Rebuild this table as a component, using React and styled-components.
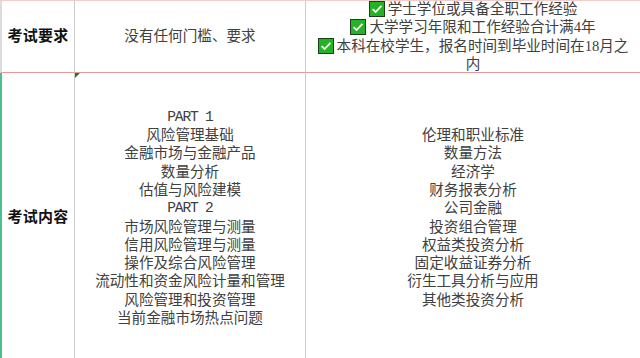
import styled, { createGlobalStyle } from "styled-components";

const GlobalStyle = createGlobalStyle`
  html, body {
    margin: 0;
    padding: 0;
    background: #fff;
    overflow: hidden;
  }
  body {
    font-family: "Liberation Serif", "Noto Sans CJK SC", serif;
  }
`;

const part1 = ["风险管理基础", "金融市场与金融产品", "数量分析", "估值与风险建模"];
const part2 = [
  "市场风险管理与测量",
  "信用风险管理与测量",
  "操作及综合风险管理",
  "流动性和资金风险计量和管理",
  "风险管理和投资管理",
  "当前金融市场热点问题",
];
const cfaTopics = [
  "伦理和职业标准",
  "数量方法",
  "经济学",
  "财务报表分析",
  "公司金融",
  "投资组合管理",
  "权益类投资分析",
  "固定收益证券分析",
  "衍生工具分析与应用",
  "其他类投资分析",
];
const requirements = [
  "学士学位或具备全职工作经验",
  "大学学习年限和工作经验合计满4年",
  "本科在校学生，报名时间到毕业时间在18月之内",
];

const CheckIcon = () => (
  <CheckSvg viewBox="0 0 16 16" width="16" height="16">
    <rect x="0.5" y="0.5" width="15" height="15" fill="#22b422" stroke="#1d3d1d" />
    <path d="M3.6 8.2 L6.6 11 L12.4 4.8" fill="none" stroke="#fff" strokeWidth="1.8" />
  </CheckSvg>
);

const App = () => {
  return (
    <>
      <GlobalStyle />
      <Sheet>
        <Label $edge="#dcdcdc" $h={72}>考试要求</Label>
        <Cell $h={72}>没有任何门槛、要求</Cell>
        <ReqCell $last $h={72}>
          {requirements.map((r) => (
            <ReqLine key={r}>
              <CheckIcon />
              {r}
            </ReqLine>
          ))}
        </ReqCell>

        <Label $edge="#4cc08f" $h={290}>考试内容</Label>
        <Cell $h={290} $marker>
          <PartLine>PART 1</PartLine>
          {part1.map((t) => (
            <Line key={t}>{t}</Line>
          ))}
          <PartLine>PART 2</PartLine>
          {part2.map((t) => (
            <Line key={t}>{t}</Line>
          ))}
        </Cell>
        <Cell $h={290} $last>
          {cfaTopics.map((t) => (
            <Line key={t}>{t}</Line>
          ))}
        </Cell>
      </Sheet>
    </>
  );
};

export default App;

// Styled Components
const Sheet = styled.div`
  display: grid;
  grid-template-columns: 75px 231px 1fr;
  width: 640px;
  border-top: 1px solid #f4cccc;
`;

const Cell = styled.div`
  position: relative;
  box-sizing: border-box;
  height: ${({ $h }) => $h}px;
  display: flex;
  flex-direction: column;
  align-items: center;
  justify-content: center;
  text-align: center;
  color: #404040;
  font-size: 14.6px;
  line-height: 18.3px;
  border-right: ${({ $last }) => ($last ? "none" : "1px solid #cbcbcb")};
  border-bottom: 1px solid #e89a9a;

  &::before {
    content: "";
    display: ${({ $marker }) => ($marker ? "block" : "none")};
    position: absolute;
    top: 0;
    left: 0;
    width: 0;
    height: 0;
    border-top: 5px solid #1e7b1e;
    border-right: 5px solid transparent;
  }
`;

const Label = styled(Cell)`
  border-left: 2px solid ${({ $edge }) => $edge};
  font-weight: bold;
  color: #111;
  font-size: 15px;
  letter-spacing: 0.3px;
`;

const ReqCell = styled(Cell)`
  padding: 0 6px;
`;

const ReqLine = styled.div`
  display: block;
`;

const CheckSvg = styled.svg`
  vertical-align: -3px;
  margin-right: 3px;
`;

const Line = styled.div`
  white-space: nowrap;
`;

const PartLine = styled(Line)`
  font-family: "Liberation Mono", monospace;
  font-size: 14.6px;
  letter-spacing: -1.2px;
`;
